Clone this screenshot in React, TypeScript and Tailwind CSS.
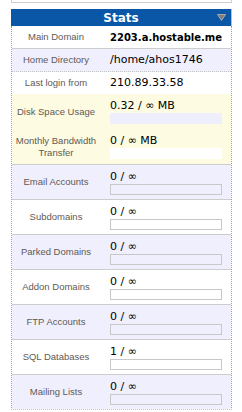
const rows: { label: string[]; value: string; bold?: boolean; bg: string }[] = [
  { label: ["Main Domain"], value: "2203.a.hostable.me", bold: true, bg: "bg-white" },
  { label: ["Home Directory"], value: "/home/ahos1746", bg: "bg-[#efeffd]" },
  { label: ["Last login from"], value: "210.89.33.58", bg: "bg-white" },
];

const usage: { label: string[]; value: string; bg: string; bar: string }[] = [
  { label: ["Disk Space Usage"], value: "0.32 / ∞ MB", bg: "bg-[#fdfbe2]", bar: "bg-[#eeeefc]" },
  { label: ["Monthly Bandwidth", "Transfer"], value: "0 / ∞ MB", bg: "bg-[#fdfbe2]", bar: "bg-white" },
  { label: ["Email Accounts"], value: "0 / ∞", bg: "bg-[#efeffd]", bar: "bg-[#efeffd] border border-[#c8c8c8]" },
  { label: ["Subdomains"], value: "0 / ∞", bg: "bg-white", bar: "bg-white border border-[#c8c8c8]" },
  { label: ["Parked Domains"], value: "0 / ∞", bg: "bg-[#efeffd]", bar: "bg-[#efeffd] border border-[#c8c8c8]" },
  { label: ["Addon Domains"], value: "0 / ∞", bg: "bg-white", bar: "bg-white border border-[#c8c8c8]" },
  { label: ["FTP Accounts"], value: "0 / ∞", bg: "bg-[#efeffd]", bar: "bg-[#efeffd] border border-[#c8c8c8]" },
  { label: ["SQL Databases"], value: "1 / ∞", bg: "bg-white", bar: "bg-white border border-[#c8c8c8]" },
  { label: ["Mailing Lists"], value: "0 / ∞", bg: "bg-[#efeffd]", bar: "bg-[#efeffd] border border-[#c8c8c8]" },
];

function Label({ lines }: { lines: string[] }) {
  return (
    <div className="w-[88px] shrink-0 flex flex-col items-center justify-center text-center text-[9.5px] leading-[12px] text-[#5f5a55] font-['Liberation_Sans',sans-serif]">
      {lines.map((l) => (
        <span key={l}>{l}</span>
      ))}
    </div>
  );
}

export default function App() {
  return (
    <div className="w-[242px] h-[412px] bg-white overflow-hidden">
      <div className="ml-[11px] w-[221px] h-[3px] border-x border-b border-[#cfcfcf]" />

      <div className="ml-[11px] mt-[6px] w-[221px]">
        <div className="relative h-[17px] bg-[#0b57a7] border-r border-[#bdbdbd] flex items-center justify-center">
          <span className="text-white font-bold text-[12px] font-['DejaVu_Sans',sans-serif] leading-none">Stats</span>
          <svg className="absolute right-[5px] top-[5px]" width="9" height="7" viewBox="0 0 9 7">
            <path d="M0.5 0.5 H8.5 L4.5 6.5 Z" fill="#7d7d7d" stroke="#a9a9a9" strokeWidth="1" />
          </svg>
        </div>

        <div className="border-x border-[#3cc6c6] border-b border-dotted border-b-[#c4c4c4]">
          {rows.map((r, i) => (
            <div
              key={r.value}
              className={`flex ${i === 2 ? "h-[22px]" : "h-[23px]"} ${r.bg} ${
                i === 0 ? "border-b border-[#cdcdcd]" : i === 1 ? "border-b border-dotted border-[#c4c4c4]" : ""
              }`}
            >
              <Label lines={r.label} />
              <div
                className={`pl-[10px] flex items-center text-black font-['DejaVu_Sans',sans-serif] ${
                  r.bold ? "font-bold text-[10px]" : "text-[11px]"
                }`}
              >
                {r.value}
              </div>
            </div>
          ))}

          {usage.map((u, i) => (
            <div
              key={u.label[0]}
              className={`flex h-[35px] ${u.bg} ${i < 2 ? "" : "border-t border-[#cdcdcd]"}`}
            >
              <Label lines={u.label} />
              <div className="pl-[10px] pt-[5px] flex flex-col">
                <span className="text-[11px] leading-[13px] text-black font-['DejaVu_Sans',sans-serif]">{u.value}</span>
                <div className={`mt-[1px] w-[112px] h-[11px] ${u.bar}`} />
              </div>
            </div>
          ))}
        </div>
      </div>
    </div>
  );
}
